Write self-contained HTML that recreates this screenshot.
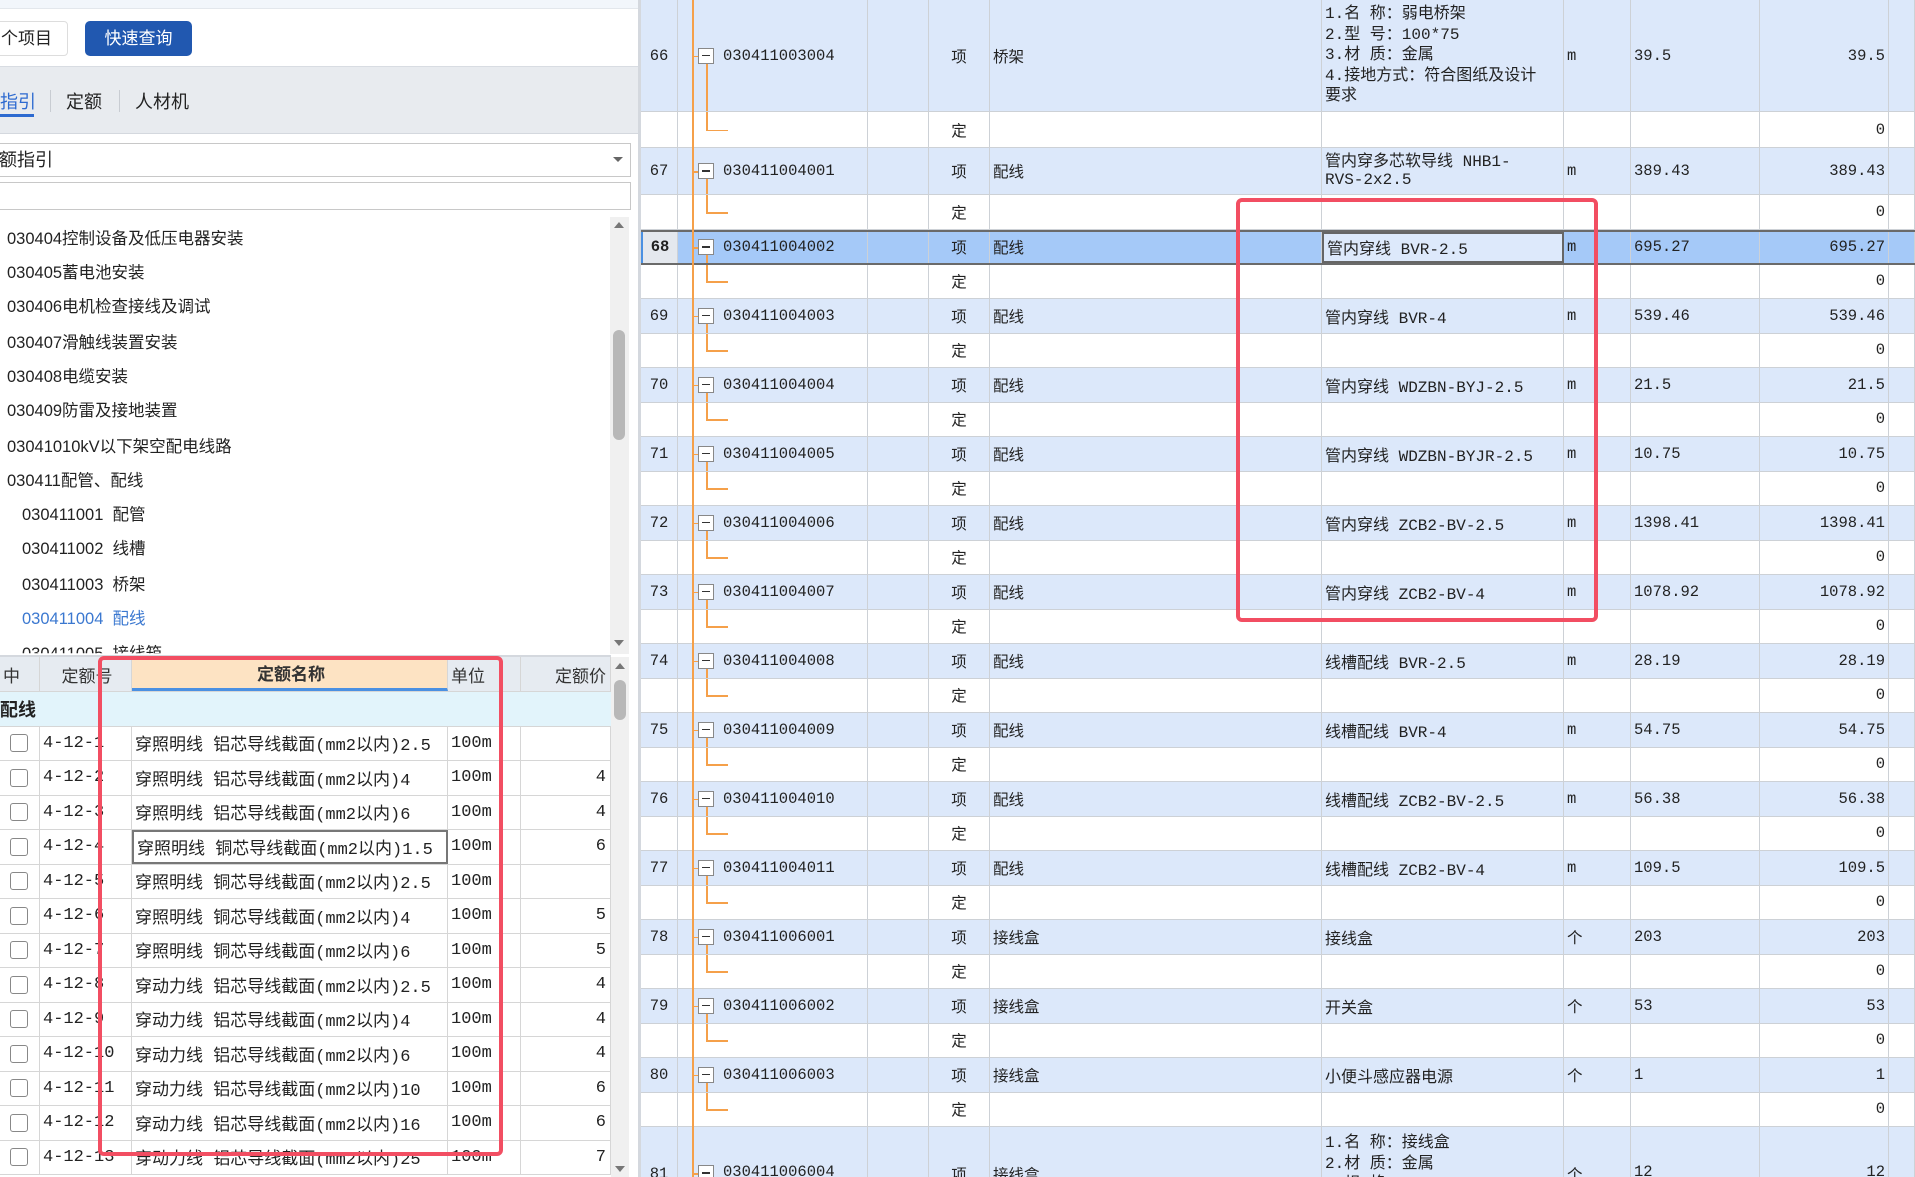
<!DOCTYPE html>
<html><head><meta charset="utf-8">
<style>
*{margin:0;padding:0;box-sizing:border-box}
html,body{width:1915px;height:1177px;overflow:hidden}
body{background:#fff;position:relative;font-family:"Liberation Sans","Noto Sans CJK SC",sans-serif;color:#222}
.abs{position:absolute}
#left{position:absolute;left:0;top:0;width:638px;height:1177px;background:#fff;overflow:hidden}
#split{position:absolute;left:638px;top:0;width:3px;height:1177px;background:#d4d8de}
#right{position:absolute;left:641px;top:0;width:1274px;height:1177px;overflow:hidden;font-family:"Liberation Mono","Noto Sans CJK SC",monospace;font-size:15.5px;color:#222}
.tree div{position:absolute;font-size:16.5px;color:#222;white-space:nowrap;transform:translateY(-50%)}
.lt{position:absolute;left:0;width:611px;height:520px;overflow:hidden;font-family:"Liberation Mono","Noto Sans CJK SC",monospace;font-size:17px}
.lr{display:flex;height:34.5px;border-bottom:1px solid #d6d6d6}
.lr>div{border-right:1px solid #d6d6d6;overflow:hidden;white-space:nowrap;display:flex;align-items:center;padding-left:3px}
.w1{width:40px}.w2{width:92px}.w3{width:316px}.w4{width:73px}.w5{width:90px;justify-content:flex-end;padding-right:4px}
.w4 span{display:inline-block;width:48px;overflow:hidden}
.cb{width:18px;height:18px;border:1.5px solid #888;border-radius:3px;background:#fff;margin-left:7px}
.r{display:flex;height:34.5px;border-bottom:1px solid #cdd1d6;background:#fff}
.r.i{background:#dce8fa}
.r>div{border-right:1px solid #cdd1d6;overflow:hidden;white-space:nowrap;display:flex;align-items:center;padding:0 3px;position:relative}
.n{width:37px;justify-content:center}.cd{width:190px}.a{width:61px;justify-content:center}.b{width:61px}.d{width:332px}.ds{width:242px;font-size:16px}.u{width:67px}.q{width:129px}.v{width:129px;justify-content:flex-end}.e{width:26px}
.bx{position:absolute;left:20px;top:50%;width:16px;height:16px;margin-top:-8px;border:1px solid #888;background:#fff}
.bx::after{content:"";position:absolute;left:3px;top:6px;width:8px;height:1.5px;background:#333}
.st{position:absolute;left:14px;top:50%;width:6px;height:1.5px;background:#f5a04a}
.dn{position:absolute;left:28px;top:calc(50% + 8px);bottom:0;width:1.5px;background:#f5a04a}
.up{position:absolute;left:28px;top:0;height:50%;width:1.5px;background:#f5a04a}
.hz{position:absolute;left:28px;top:50%;width:22px;height:1.5px;background:#f5a04a}
.cd .t{margin-left:42px}
.red{position:absolute;border:4px solid #f24e62;border-radius:6px}
</style></head><body>
<div id="left">
  <div class="abs" style="left:0;top:0;width:638px;height:9px;background:#f2f6fb;border-bottom:1px solid #e3e7ec"></div>
  <div class="abs" style="left:-10px;top:21px;width:78px;height:35px;border:1px solid #ddd;border-radius:4px;font-size:17px;line-height:33px;padding-left:10px">个项目</div>
  <div class="abs" style="left:85px;top:21px;width:107px;height:35px;background:#2158b0;border-radius:5px;color:#fff;font-size:17px;line-height:35px;text-align:center">快速查询</div>
  <div class="abs" style="left:0;top:66px;width:638px;height:68px;background:#e8ebef;border-top:1px solid #d8dce2;border-bottom:1px solid #d4d8de"></div>
  <div class="abs" style="left:0;top:88px;font-size:18px;color:#2d6ad0">指引</div>
  <div class="abs" style="left:0;top:114px;width:34px;height:3px;background:#2d6ad0"></div>
  <div class="abs" style="left:50px;top:90px;width:1px;height:22px;background:#c8ccd2"></div>
  <div class="abs" style="left:66px;top:88px;font-size:18px">定额</div>
  <div class="abs" style="left:119px;top:90px;width:1px;height:22px;background:#c8ccd2"></div>
  <div class="abs" style="left:135px;top:88px;font-size:18px">人材机</div>
  <div class="abs" style="left:-2px;top:143px;width:633px;height:34px;border:1px solid #c8c8c8;font-size:18px;line-height:32px;background:#fff">额指引</div>
  <div class="abs" style="left:613px;top:157px;width:0;height:0;border-left:5px solid transparent;border-right:5px solid transparent;border-top:5px solid #666"></div>
  <div class="abs" style="left:-2px;top:182px;width:633px;height:28px;border:1px solid #c8c8c8"></div>
  <div class="tree">
    <div style="left:7px;top:237px">030404控制设备及低压电器安装</div>
    <div style="left:7px;top:271px">030405蓄电池安装</div>
    <div style="left:7px;top:305px">030406电机检查接线及调试</div>
    <div style="left:7px;top:341px">030407滑触线装置安装</div>
    <div style="left:7px;top:375px">030408电缆安装</div>
    <div style="left:7px;top:409px">030409防雷及接地装置</div>
    <div style="left:7px;top:445px">03041010kV以下架空配电线路</div>
    <div style="left:7px;top:479px">030411配管、配线</div>
    <div style="left:22px;top:513px">030411001&nbsp;&nbsp;配管</div>
    <div style="left:22px;top:547px">030411002&nbsp;&nbsp;线槽</div>
    <div style="left:22px;top:583px">030411003&nbsp;&nbsp;桥架</div>
    <div style="left:22px;top:617px;color:#3b78d0">030411004&nbsp;&nbsp;配线</div>
    <div style="left:22px;top:652px;clip-path:inset(0 0 45% 0)">030411005&nbsp;&nbsp;接线箱</div>
  </div>
  <div class="abs" style="left:610px;top:217px;width:19px;height:437px;background:#f0f0f0"></div>
  <div class="abs" style="left:614px;top:222px;width:0;height:0;border-left:5px solid transparent;border-right:5px solid transparent;border-bottom:6px solid #777"></div>
  <div class="abs" style="left:614px;top:640px;width:0;height:0;border-left:5px solid transparent;border-right:5px solid transparent;border-top:6px solid #777"></div>
  <div class="abs" style="left:613px;top:330px;width:12px;height:110px;background:#b8b8b8;border-radius:6px"></div>
  <div class="abs" style="left:0;top:655px;width:611px;height:2px;background:#d4d8de"></div>

  <div class="lt" style="top:657px">
    <div class="lr" style="height:35px;background:#e6ebf1;font-family:'Liberation Sans','Noto Sans CJK SC',sans-serif;font-size:17px;color:#333">
      <div class="w1">中</div><div class="w2" style="justify-content:center">定额号</div>
      <div class="w3" style="justify-content:center;background:#fde3c3;font-weight:bold;border-bottom:3px solid #4a90e2">定额名称</div>
      <div class="w4">单位</div><div class="w5">定额价</div>
    </div>
    <div class="lr" style="background:#e2f4fb;font-family:'Liberation Sans','Noto Sans CJK SC',sans-serif;font-weight:bold;font-size:18px"><div style="width:611px;border:none;padding-left:0">配线</div></div>
    <div class="lr"><div class="w1"><span class="cb"></span></div><div class="w2">4-12-1</div><div class="w3">穿照明线 铝芯导线截面(mm2以内)2.5</div><div class="w4"><span>100m</span></div><div class="w5"></div></div>
    <div class="lr"><div class="w1"><span class="cb"></span></div><div class="w2">4-12-2</div><div class="w3">穿照明线 铝芯导线截面(mm2以内)4</div><div class="w4"><span>100m</span></div><div class="w5">4</div></div>
    <div class="lr"><div class="w1"><span class="cb"></span></div><div class="w2">4-12-3</div><div class="w3">穿照明线 铝芯导线截面(mm2以内)6</div><div class="w4"><span>100m</span></div><div class="w5">4</div></div>
    <div class="lr"><div class="w1"><span class="cb"></span></div><div class="w2">4-12-4</div><div class="w3" style="border:2px solid #777">穿照明线 铜芯导线截面(mm2以内)1.5</div><div class="w4"><span>100m</span></div><div class="w5">6</div></div>
    <div class="lr"><div class="w1"><span class="cb"></span></div><div class="w2">4-12-5</div><div class="w3">穿照明线 铜芯导线截面(mm2以内)2.5</div><div class="w4"><span>100m</span></div><div class="w5"></div></div>
    <div class="lr"><div class="w1"><span class="cb"></span></div><div class="w2">4-12-6</div><div class="w3">穿照明线 铜芯导线截面(mm2以内)4</div><div class="w4"><span>100m</span></div><div class="w5">5</div></div>
    <div class="lr"><div class="w1"><span class="cb"></span></div><div class="w2">4-12-7</div><div class="w3">穿照明线 铜芯导线截面(mm2以内)6</div><div class="w4"><span>100m</span></div><div class="w5">5</div></div>
    <div class="lr"><div class="w1"><span class="cb"></span></div><div class="w2">4-12-8</div><div class="w3">穿动力线 铝芯导线截面(mm2以内)2.5</div><div class="w4"><span>100m</span></div><div class="w5">4</div></div>
    <div class="lr"><div class="w1"><span class="cb"></span></div><div class="w2">4-12-9</div><div class="w3">穿动力线 铝芯导线截面(mm2以内)4</div><div class="w4"><span>100m</span></div><div class="w5">4</div></div>
    <div class="lr"><div class="w1"><span class="cb"></span></div><div class="w2">4-12-10</div><div class="w3">穿动力线 铝芯导线截面(mm2以内)6</div><div class="w4"><span>100m</span></div><div class="w5">4</div></div>
    <div class="lr"><div class="w1"><span class="cb"></span></div><div class="w2">4-12-11</div><div class="w3">穿动力线 铝芯导线截面(mm2以内)10</div><div class="w4"><span>100m</span></div><div class="w5">6</div></div>
    <div class="lr"><div class="w1"><span class="cb"></span></div><div class="w2">4-12-12</div><div class="w3">穿动力线 铝芯导线截面(mm2以内)16</div><div class="w4"><span>100m</span></div><div class="w5">6</div></div>
    <div class="lr"><div class="w1"><span class="cb"></span></div><div class="w2">4-12-13</div><div class="w3">穿动力线 铝芯导线截面(mm2以内)25</div><div class="w4"><span>100m</span></div><div class="w5">7</div></div>
  </div>
  <div class="abs" style="left:611px;top:657px;width:18px;height:520px;background:#f0f0f0"></div>
  <div class="abs" style="left:615px;top:663px;width:0;height:0;border-left:5px solid transparent;border-right:5px solid transparent;border-bottom:6px solid #777"></div>
  <div class="abs" style="left:614px;top:680px;width:12px;height:40px;background:#b8b8b8;border-radius:6px"></div>
  <div class="abs" style="left:615px;top:1166px;width:0;height:0;border-left:5px solid transparent;border-right:5px solid transparent;border-top:6px solid #777"></div>
</div>
<div id="split"></div>

<div id="right">
  <div class="abs" style="left:51px;top:0;width:1.5px;height:1177px;background:#f5a04a;z-index:2"></div>
  <div class="r i" style="height:112px"><div class="n">66</div><div class="cd"><span class="st"></span><span class="bx"></span><span class="dn"></span><span class="t">030411003004</span></div><div class="b"></div><div class="a">项</div><div class="d">桥架</div><div class="ds" style="white-space:normal;line-height:20.5px;align-items:center">1.名 称：弱电桥架<br>2.型 号：100*75<br>3.材 质：金属<br>4.接地方式：符合图纸及设计<br>要求</div><div class="u">m</div><div class="q">39.5</div><div class="v">39.5</div><div class="e"></div></div>
  <div class="r" style="height:36px"><div class="n"></div><div class="cd"><span class="up"></span><span class="hz"></span></div><div class="b"></div><div class="a">定</div><div class="d"></div><div class="ds"></div><div class="u"></div><div class="q"></div><div class="v">0</div><div class="e"></div></div>
  <div class="r i" style="height:47px"><div class="n">67</div><div class="cd"><span class="st"></span><span class="bx"></span><span class="dn"></span><span class="t">030411004001</span></div><div class="b"></div><div class="a">项</div><div class="d">配线</div><div class="ds" style="white-space:normal;line-height:18px">管内穿多芯软导线 NHB1-<br>RVS-2x2.5</div><div class="u">m</div><div class="q">389.43</div><div class="v">389.43</div><div class="e"></div></div>
  <div class="r" style="height:35px"><div class="n"></div><div class="cd"><span class="up"></span><span class="hz"></span></div><div class="b"></div><div class="a">定</div><div class="d"></div><div class="ds"></div><div class="u"></div><div class="q"></div><div class="v">0</div><div class="e"></div></div>
  <div class="r" style="background:#a5c9f8;border-top:2px solid #6a6a6a;border-bottom:2px solid #6a6a6a"><div class="n" style="background:#e4e8ee;font-weight:bold;border-left:2px solid #4a90e2">68</div><div class="cd"><span class="st"></span><span class="bx"></span><span class="dn"></span><span class="t">030411004002</span></div><div class="b"></div><div class="a">项</div><div class="d">配线</div><div class="ds" style="background:#dde9fb;border:2px solid #666">管内穿线 BVR-2.5</div><div class="u">m</div><div class="q">695.27</div><div class="v">695.27</div><div class="e"></div></div>
  <div class="r"><div class="n"></div><div class="cd"><span class="up"></span><span class="hz"></span></div><div class="b"></div><div class="a">定</div><div class="d"></div><div class="ds"></div><div class="u"></div><div class="q"></div><div class="v">0</div><div class="e"></div></div>
  <div class="r i"><div class="n">69</div><div class="cd"><span class="st"></span><span class="bx"></span><span class="dn"></span><span class="t">030411004003</span></div><div class="b"></div><div class="a">项</div><div class="d">配线</div><div class="ds">管内穿线 BVR-4</div><div class="u">m</div><div class="q">539.46</div><div class="v">539.46</div><div class="e"></div></div>
  <div class="r"><div class="n"></div><div class="cd"><span class="up"></span><span class="hz"></span></div><div class="b"></div><div class="a">定</div><div class="d"></div><div class="ds"></div><div class="u"></div><div class="q"></div><div class="v">0</div><div class="e"></div></div>
  <div class="r i"><div class="n">70</div><div class="cd"><span class="st"></span><span class="bx"></span><span class="dn"></span><span class="t">030411004004</span></div><div class="b"></div><div class="a">项</div><div class="d">配线</div><div class="ds">管内穿线 WDZBN-BYJ-2.5</div><div class="u">m</div><div class="q">21.5</div><div class="v">21.5</div><div class="e"></div></div>
  <div class="r"><div class="n"></div><div class="cd"><span class="up"></span><span class="hz"></span></div><div class="b"></div><div class="a">定</div><div class="d"></div><div class="ds"></div><div class="u"></div><div class="q"></div><div class="v">0</div><div class="e"></div></div>
  <div class="r i"><div class="n">71</div><div class="cd"><span class="st"></span><span class="bx"></span><span class="dn"></span><span class="t">030411004005</span></div><div class="b"></div><div class="a">项</div><div class="d">配线</div><div class="ds">管内穿线 WDZBN-BYJR-2.5</div><div class="u">m</div><div class="q">10.75</div><div class="v">10.75</div><div class="e"></div></div>
  <div class="r"><div class="n"></div><div class="cd"><span class="up"></span><span class="hz"></span></div><div class="b"></div><div class="a">定</div><div class="d"></div><div class="ds"></div><div class="u"></div><div class="q"></div><div class="v">0</div><div class="e"></div></div>
  <div class="r i"><div class="n">72</div><div class="cd"><span class="st"></span><span class="bx"></span><span class="dn"></span><span class="t">030411004006</span></div><div class="b"></div><div class="a">项</div><div class="d">配线</div><div class="ds">管内穿线 ZCB2-BV-2.5</div><div class="u">m</div><div class="q">1398.41</div><div class="v">1398.41</div><div class="e"></div></div>
  <div class="r"><div class="n"></div><div class="cd"><span class="up"></span><span class="hz"></span></div><div class="b"></div><div class="a">定</div><div class="d"></div><div class="ds"></div><div class="u"></div><div class="q"></div><div class="v">0</div><div class="e"></div></div>
  <div class="r i"><div class="n">73</div><div class="cd"><span class="st"></span><span class="bx"></span><span class="dn"></span><span class="t">030411004007</span></div><div class="b"></div><div class="a">项</div><div class="d">配线</div><div class="ds">管内穿线 ZCB2-BV-4</div><div class="u">m</div><div class="q">1078.92</div><div class="v">1078.92</div><div class="e"></div></div>
  <div class="r"><div class="n"></div><div class="cd"><span class="up"></span><span class="hz"></span></div><div class="b"></div><div class="a">定</div><div class="d"></div><div class="ds"></div><div class="u"></div><div class="q"></div><div class="v">0</div><div class="e"></div></div>
  <div class="r i"><div class="n">74</div><div class="cd"><span class="st"></span><span class="bx"></span><span class="dn"></span><span class="t">030411004008</span></div><div class="b"></div><div class="a">项</div><div class="d">配线</div><div class="ds">线槽配线 BVR-2.5</div><div class="u">m</div><div class="q">28.19</div><div class="v">28.19</div><div class="e"></div></div>
  <div class="r"><div class="n"></div><div class="cd"><span class="up"></span><span class="hz"></span></div><div class="b"></div><div class="a">定</div><div class="d"></div><div class="ds"></div><div class="u"></div><div class="q"></div><div class="v">0</div><div class="e"></div></div>
  <div class="r i"><div class="n">75</div><div class="cd"><span class="st"></span><span class="bx"></span><span class="dn"></span><span class="t">030411004009</span></div><div class="b"></div><div class="a">项</div><div class="d">配线</div><div class="ds">线槽配线 BVR-4</div><div class="u">m</div><div class="q">54.75</div><div class="v">54.75</div><div class="e"></div></div>
  <div class="r"><div class="n"></div><div class="cd"><span class="up"></span><span class="hz"></span></div><div class="b"></div><div class="a">定</div><div class="d"></div><div class="ds"></div><div class="u"></div><div class="q"></div><div class="v">0</div><div class="e"></div></div>
  <div class="r i"><div class="n">76</div><div class="cd"><span class="st"></span><span class="bx"></span><span class="dn"></span><span class="t">030411004010</span></div><div class="b"></div><div class="a">项</div><div class="d">配线</div><div class="ds">线槽配线 ZCB2-BV-2.5</div><div class="u">m</div><div class="q">56.38</div><div class="v">56.38</div><div class="e"></div></div>
  <div class="r"><div class="n"></div><div class="cd"><span class="up"></span><span class="hz"></span></div><div class="b"></div><div class="a">定</div><div class="d"></div><div class="ds"></div><div class="u"></div><div class="q"></div><div class="v">0</div><div class="e"></div></div>
  <div class="r i"><div class="n">77</div><div class="cd"><span class="st"></span><span class="bx"></span><span class="dn"></span><span class="t">030411004011</span></div><div class="b"></div><div class="a">项</div><div class="d">配线</div><div class="ds">线槽配线 ZCB2-BV-4</div><div class="u">m</div><div class="q">109.5</div><div class="v">109.5</div><div class="e"></div></div>
  <div class="r"><div class="n"></div><div class="cd"><span class="up"></span><span class="hz"></span></div><div class="b"></div><div class="a">定</div><div class="d"></div><div class="ds"></div><div class="u"></div><div class="q"></div><div class="v">0</div><div class="e"></div></div>
  <div class="r i"><div class="n">78</div><div class="cd"><span class="st"></span><span class="bx"></span><span class="dn"></span><span class="t">030411006001</span></div><div class="b"></div><div class="a">项</div><div class="d">接线盒</div><div class="ds">接线盒</div><div class="u">个</div><div class="q">203</div><div class="v">203</div><div class="e"></div></div>
  <div class="r"><div class="n"></div><div class="cd"><span class="up"></span><span class="hz"></span></div><div class="b"></div><div class="a">定</div><div class="d"></div><div class="ds"></div><div class="u"></div><div class="q"></div><div class="v">0</div><div class="e"></div></div>
  <div class="r i"><div class="n">79</div><div class="cd"><span class="st"></span><span class="bx"></span><span class="dn"></span><span class="t">030411006002</span></div><div class="b"></div><div class="a">项</div><div class="d">接线盒</div><div class="ds">开关盒</div><div class="u">个</div><div class="q">53</div><div class="v">53</div><div class="e"></div></div>
  <div class="r"><div class="n"></div><div class="cd"><span class="up"></span><span class="hz"></span></div><div class="b"></div><div class="a">定</div><div class="d"></div><div class="ds"></div><div class="u"></div><div class="q"></div><div class="v">0</div><div class="e"></div></div>
  <div class="r i"><div class="n">80</div><div class="cd"><span class="st"></span><span class="bx"></span><span class="dn"></span><span class="t">030411006003</span></div><div class="b"></div><div class="a">项</div><div class="d">接线盒</div><div class="ds">小便斗感应器电源</div><div class="u">个</div><div class="q">1</div><div class="v">1</div><div class="e"></div></div>
  <div class="r"><div class="n"></div><div class="cd"><span class="up"></span><span class="hz"></span></div><div class="b"></div><div class="a">定</div><div class="d"></div><div class="ds"></div><div class="u"></div><div class="q"></div><div class="v">0</div><div class="e"></div></div>
  <div class="r i" style="height:60px;align-items:stretch"><div class="n" style="align-items:flex-start;padding-top:38px">81</div><div class="cd" style="align-items:flex-start;padding-top:36px"><span class="st" style="top:46px"></span><span class="bx" style="top:46px"></span><span class="t">030411006004</span></div><div class="b"></div><div class="a" style="align-items:flex-start;padding-top:36px">项</div><div class="d" style="align-items:flex-start;padding-top:36px">接线盒</div><div class="ds" style="white-space:normal;line-height:20.5px;align-items:flex-start;padding-top:6px">1.名 称：接线盒<br>2.材 质：金属<br>3.规 格</div><div class="u" style="align-items:flex-start;padding-top:36px">个</div><div class="q" style="align-items:flex-start;padding-top:36px">12</div><div class="v" style="align-items:flex-start;padding-top:36px">12</div><div class="e"></div></div>
</div>

<div class="red" style="left:98px;top:656px;width:405px;height:500px"></div>
<div class="red" style="left:1236px;top:198px;width:362px;height:424px"></div>
</body></html>
